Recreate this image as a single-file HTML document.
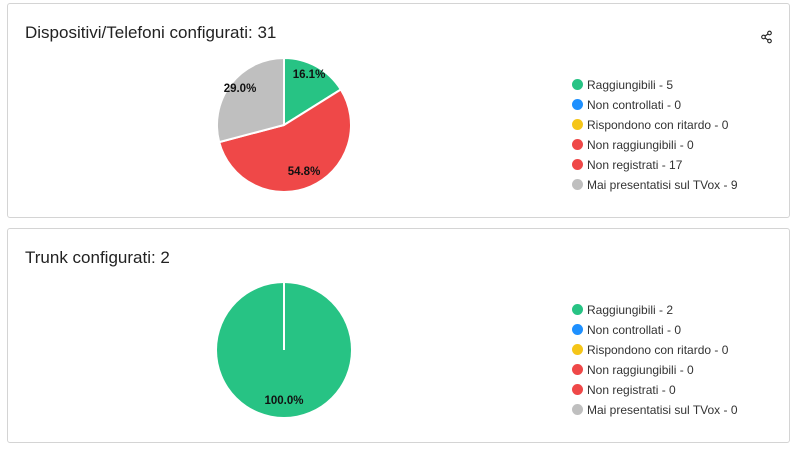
<!DOCTYPE html>
<html><head><style>
body{margin:0;width:797px;height:453px;background:#fff;font-family:"Liberation Sans",Arial,sans-serif;position:relative;overflow:hidden}
.card{position:absolute;left:7px;width:781px;height:213px;border:1px solid #d4d4d4;border-radius:3px;background:#fff}
.t{position:absolute;left:17px;font-size:17px;color:#222}
.lg{position:absolute;left:564px;font-size:12px;color:#333}
.lg div{height:20px;line-height:20px;position:relative;padding-left:15px;white-space:nowrap}
.lg span{position:absolute;left:0;top:4px;width:11px;height:11px;border-radius:50%}
</style></head><body>
<div class="card" style="top:3px">
<div class="t" style="top:19px">Dispositivi/Telefoni configurati: 31</div>
<svg style="position:absolute;left:752px;top:26px" width="14" height="14" viewBox="0 0 14 14"><g fill="none" stroke="#222" stroke-width="1.1"><circle cx="9.5" cy="3" r="1.8"/><circle cx="3.5" cy="7" r="1.8"/><circle cx="9.5" cy="11" r="1.8"/><path d="M5 6 8 4M5 8 8 10"/></g></svg>
<div class="lg" style="top:71px">
<div><span style="background:#27c384"></span>Raggiungibili - 5</div>
<div><span style="background:#1e90ff"></span>Non controllati - 0</div>
<div><span style="background:#f5c518"></span>Rispondono con ritardo - 0</div>
<div><span style="background:#ef4848"></span>Non raggiungibili - 0</div>
<div><span style="background:#ef4848"></span>Non registrati - 17</div>
<div><span style="background:#bfbfbf"></span>Mai presentatisi sul TVox - 9</div>
</div>
</div>
<div class="card" style="top:228px">
<div class="t" style="top:19px">Trunk configurati: 2</div>
<div class="lg" style="top:71px">
<div><span style="background:#27c384"></span>Raggiungibili - 2</div>
<div><span style="background:#1e90ff"></span>Non controllati - 0</div>
<div><span style="background:#f5c518"></span>Rispondono con ritardo - 0</div>
<div><span style="background:#ef4848"></span>Non raggiungibili - 0</div>
<div><span style="background:#ef4848"></span>Non registrati - 0</div>
<div><span style="background:#bfbfbf"></span>Mai presentatisi sul TVox - 0</div>
</div>
</div>
<svg style="position:absolute;left:0;top:0" width="797" height="453">
<g stroke="#fff" stroke-width="2" stroke-linejoin="round">
<path d="M284 125 L284 58 A67 67 0 0 1 340.8 89.5 Z" fill="#27c384"/>
<path d="M284 125 L340.8 89.5 A67 67 0 1 1 219.2 142.1 Z" fill="#ef4848"/>
<path d="M284 125 L219.2 142.1 A67 67 0 0 1 284 58 Z" fill="#bfbfbf"/>
<circle cx="284" cy="350" r="67" fill="#27c384" stroke="none"/>
<path d="M284 350 L284 283" fill="none"/>
</g>
<g font-size="11.5" font-weight="bold" fill="#111" text-anchor="middle" font-family="Liberation Sans,Arial,sans-serif">
<text x="309" y="78">16.1%</text>
<text x="240" y="92">29.0%</text>
<text x="304" y="175">54.8%</text>
<text x="284" y="404">100.0%</text>
</g>
</svg>
</body></html>
